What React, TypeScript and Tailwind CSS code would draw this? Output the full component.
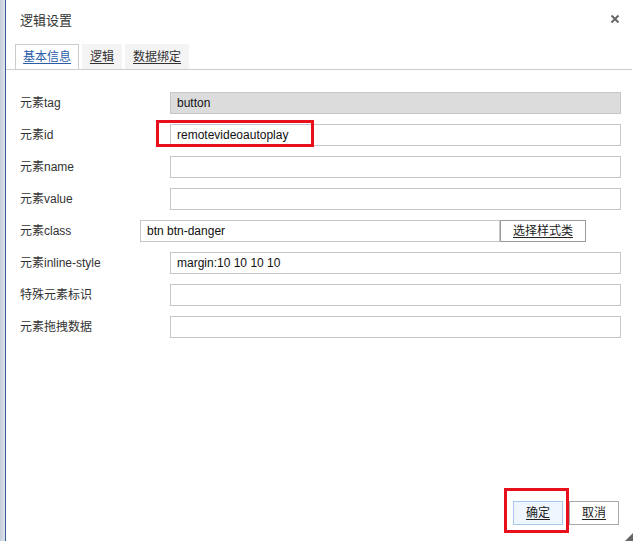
import React from "react";

const Row = ({ label, value, disabled, highlight }: { label: string; value?: string; disabled?: boolean; highlight?: boolean }) => (
  <div className="flex items-center h-[22px]">
    <div className="w-[150px] text-[12px] text-[#333] leading-[22px]">{label}</div>
    <div className="relative">
      <div
        className={`w-[451px] h-[22px] border border-[#c4c7cc] pl-[6px] text-[12px] leading-[20px] text-[#111] ${disabled ? "bg-[#dcdcdc]" : "bg-white"}`}
      >
        {value}
      </div>
      {highlight && (
        <div className="absolute left-[-14px] top-[-4px] w-[158px] h-[27px] border-[3px] border-[#e8101c] pointer-events-none" />
      )}
    </div>
  </div>
);

export default function App() {
  return (
    <div className="flex h-[541px] w-[633px] overflow-hidden bg-white font-['Liberation_Sans','Noto_Sans_CJK_SC',sans-serif]">
      <div className="w-[5px] bg-gradient-to-r from-[#c3ccd8] to-[#dfe4eb]" />
      <div className="relative flex flex-1 flex-col border-l border-[#3a5a94] bg-white">
        <div className="flex h-[44px] items-start justify-between pl-[14px] pr-[12px] pt-[11px]">
          <div className="text-[13px] leading-[20px] text-[#333]">逻辑设置</div>
          <svg width="10" height="10" viewBox="0 0 10 10" className="mt-[3px] mr-[1px]">
            <path d="M1.5 1.5 L8.5 8.5 M8.5 1.5 L1.5 8.5" stroke="#666" strokeWidth="2" />
          </svg>
        </div>
        <div className="mr-[1px] flex gap-[3px] border-b border-[#cccccc] pl-[9px]">
          <div className="h-[25px] border border-b-0 border-[#cccccc] bg-white px-[7px] text-[12px] leading-[24px] text-[#2a5caa] underline underline-offset-2">
            基本信息
          </div>
          <div className="h-[25px] border border-b-0 border-transparent bg-[#f4f4f4] px-[7px] text-[12px] leading-[24px] text-[#333] underline underline-offset-2">
            逻辑
          </div>
          <div className="h-[25px] border border-b-0 border-transparent bg-[#f4f4f4] px-[7px] text-[12px] leading-[24px] text-[#333] underline underline-offset-2">
            数据绑定
          </div>
        </div>
        <div className="mt-[22px] flex flex-col gap-[10px] pl-[14px]">
          <Row label="元素tag" value="button" disabled />
          <Row label="元素id" value="remotevideoautoplay" highlight />
          <Row label="元素name" />
          <Row label="元素value" />
          <div className="flex items-center h-[22px]">
            <div className="w-[120px] text-[12px] text-[#333] leading-[22px]">元素class</div>
            <div className="w-[360px] h-[22px] border border-[#c4c7cc] pl-[6px] text-[12px] leading-[20px] text-[#111] bg-white">
              btn btn-danger
            </div>
            <div className="w-[86px] h-[22px] border border-[#9a9a9a] bg-white text-center text-[12px] leading-[20px] text-[#222] underline underline-offset-2">
              选择样式类
            </div>
          </div>
          <Row label="元素inline-style" value="margin:10 10 10 10" />
          <Row label="特殊元素标识" />
          <Row label="元素拖拽数据" />
        </div>
        <div className="flex-1" />
        <div className="flex justify-end gap-[6px] pb-[16px] pr-[14px]">
          <div className="relative">
            <div className="w-[50px] h-[24px] border border-[#a6c8f0] bg-[#eff6ff] text-center text-[12px] leading-[22px] text-[#222] underline underline-offset-2">
              确定
            </div>
            <div className="absolute left-[-9px] top-[-13px] w-[65px] h-[45px] border-[3px] border-[#e8101c] pointer-events-none" />
          </div>
          <div className="w-[50px] h-[24px] border border-[#a8a8a8] bg-white text-center text-[12px] leading-[22px] text-[#222] underline underline-offset-2">
            取消
          </div>
        </div>
        <svg width="8" height="8" viewBox="0 0 8 8" className="absolute bottom-0 right-0">
          <path d="M8 0 L8 8 L0 8 Z" fill="#666" />
        </svg>
      </div>
    </div>
  );
}
